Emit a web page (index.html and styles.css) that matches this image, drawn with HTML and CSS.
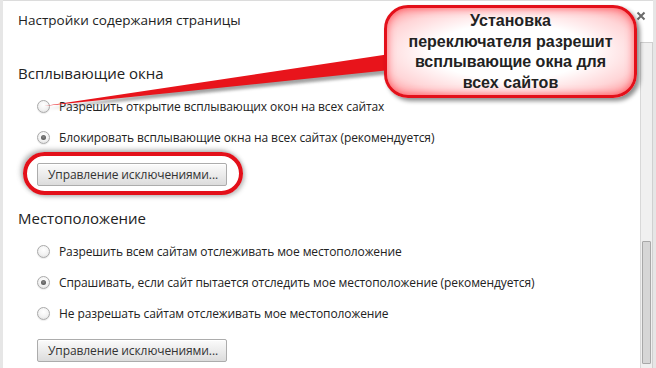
FILE: index.html
```html
<!DOCTYPE html>
<html lang="ru">
<head>
<meta charset="utf-8">
<title>Настройки содержания страницы</title>
<link rel="stylesheet" href="styles.css">
</head>
<body>
<div class="page">
  <div class="dialog">
    <div class="header">
      <div class="title">Настройки содержания страницы</div>
      <div class="close" aria-label="Закрыть">
        <svg width="10" height="10" viewBox="0 0 10 10"><path d="M1.5 1.5 L8.5 8.5 M8.5 1.5 L1.5 8.5" stroke="#6a6a6a" stroke-width="2" fill="none"/></svg>
      </div>
    </div>
    <div class="body">
      <div class="content">
        <div class="section first">
          <div class="section-title">Всплывающие окна</div>
          <div class="options">
            <label class="option"><span class="radio"></span><span class="label">Разрешить открытие всплывающих окон на всех сайтах</span></label>
            <label class="option"><span class="radio checked"></span><span class="label">Блокировать всплывающие окна на всех сайтах (рекомендуется)</span></label>
          </div>
          <button class="btn">Управление исключениями...</button>
        </div>
        <div class="section">
          <div class="section-title">Местоположение</div>
          <div class="options">
            <label class="option"><span class="radio"></span><span class="label">Разрешить всем сайтам отслеживать мое местоположение</span></label>
            <label class="option"><span class="radio checked"></span><span class="label">Спрашивать, если сайт пытается отследить мое местоположение (рекомендуется)</span></label>
            <label class="option"><span class="radio"></span><span class="label">Не разрешать сайтам отслеживать мое местоположение</span></label>
          </div>
          <button class="btn">Управление исключениями...</button>
        </div>
      </div>
      <div class="scrollbar"><div class="thumb"></div></div>
    </div>
  </div>

  <svg class="arrow" width="656" height="368" viewBox="0 0 656 368">
    <defs>
      <filter id="sh" x="-10%" y="-50%" width="120%" height="200%">
        <feGaussianBlur stdDeviation="1.6"/>
      </filter>
    </defs>
    <polygon points="46,109 392,58 392,74" fill="#555" opacity="0.55" filter="url(#sh)"/>
    <polygon points="44,106 390,54 390,70" fill="#e8141b"/>
  </svg>

  <div class="ring"></div>

  <div class="callout">
    <div class="callout-text">Установка<br>переключателя разрешит<br>всплывающие окна для<br>всех сайтов</div>
  </div>
</div>
</body>
</html>
```

FILE: styles.css
```css
html, body {
  margin: 0;
  padding: 0;
}
body {
  width: 656px;
  height: 368px;
  overflow: hidden;
  background: #e6e6e6;
  font-family: "Open Sans", "Noto Sans", sans-serif;
  color: #222;
}
.page {
  position: relative;
  width: 656px;
  height: 368px;
  padding-left: 3px;
  box-sizing: border-box;
  display: flex;
}
.dialog {
  width: 650px;
  height: 368px;
  background: #fff;
  border-top: 1px solid #dcdcdc;
  box-sizing: border-box;
  display: flex;
  flex-direction: column;
}
.header {
  height: 41px;
  display: flex;
  align-items: flex-start;
  padding-left: 15px;
  flex: none;
}
.title {
  font-size: 13.5px;
  line-height: 20px;
  margin-top: 9px;
  color: #222;
}
.close {
  margin-left: auto;
  margin-right: 7px;
  margin-top: 10px;
  width: 10px;
  height: 10px;
  display: flex;
}
.body {
  flex: 1;
  display: flex;
  min-height: 0;
}
.content {
  flex: 1;
  padding-left: 15px;
}
.section {
  margin-top: 22px;
}
.section.first {
  margin-top: 21px;
}
.section-title {
  font-size: 15px;
  line-height: 20px;
}
.options {
  margin-top: 8px;
  padding-left: 19px;
}
.option {
  height: 31px;
  display: flex;
  align-items: center;
  font-size: 12px;
  letter-spacing: -0.1px;
}
.radio {
  width: 13px;
  height: 13px;
  border-radius: 50%;
  box-sizing: border-box;
  border: 1px solid #a9a9a9;
  background: radial-gradient(circle at 50% 35%, #ffffff 0%, #f2f2f2 55%, #d9d9d9 100%);
  box-shadow: 0 1px 1px rgba(0,0,0,0.08);
  flex: none;
  position: relative;
}
.radio.checked::after {
  content: "";
  position: absolute;
  left: 3px;
  top: 3px;
  width: 5px;
  height: 5px;
  border-radius: 50%;
  background: radial-gradient(circle at 50% 40%, #8a8a8a, #444);
}
.label {
  margin-left: 9px;
  white-space: nowrap;
}
.btn {
  display: block;
  margin-top: 10px;
  margin-left: 19px;
  width: 190px;
  height: 23px;
  padding: 0 0 0 10px;
  text-align: left;
  font-family: inherit;
  font-size: 12px;
  letter-spacing: -0.1px;
  color: #333;
  border: 1px solid #acacac;
  border-radius: 2px;
  background: linear-gradient(#fbfbfb, #ececec 50%, #dcdcdc);
  box-shadow: inset 0 1px 0 #fff;
}
.scrollbar {
  width: 13px;
  flex: none;
  background: #f0f0f0;
  border-left: 1px solid #d8d8d8;
  border-top: 1px solid #cfcfcf;
  border-right: 1px solid #d0d0d0;
  box-sizing: border-box;
  padding-top: 198px;
  display: flex;
  justify-content: center;
}
.thumb {
  width: 9px;
  height: 123px;
  box-sizing: border-box;
  border: 1px solid #a8a8a8;
  background: #d6d6d6;
  border-radius: 1px;
}
.arrow {
  position: absolute;
  left: 0;
  top: 0;
  pointer-events: none;
}
.ring {
  position: absolute;
  left: 23px;
  top: 152px;
  width: 220px;
  height: 43px;
  box-sizing: border-box;
  border: 4px solid #e3101a;
  border-radius: 22px;
  box-shadow: -2px -2px 5px rgba(80,80,80,0.45), 2px 2px 4px rgba(80,80,80,0.35);
}
.callout {
  position: absolute;
  left: 384px;
  top: 5px;
  width: 253px;
  height: 93px;
  box-sizing: border-box;
  border: 3px solid #e3101a;
  border-radius: 24px;
  background: radial-gradient(ellipse at 50% 50%, #ffffff 0%, #ffffff 45%, #ffd6d8 75%, #ff9a9e 100%);
  box-shadow: inset 0 0 8px rgba(255,40,50,0.7), 3px 3px 4px rgba(0,0,0,0.45);
  display: flex;
  align-items: center;
  justify-content: center;
}
.callout-text {
  font-family: "Liberation Sans", Arial, sans-serif;
  font-weight: bold;
  font-size: 16px;
  line-height: 20.5px;
  text-align: center;
  color: #222;
  margin-top: 1px;
}
```
